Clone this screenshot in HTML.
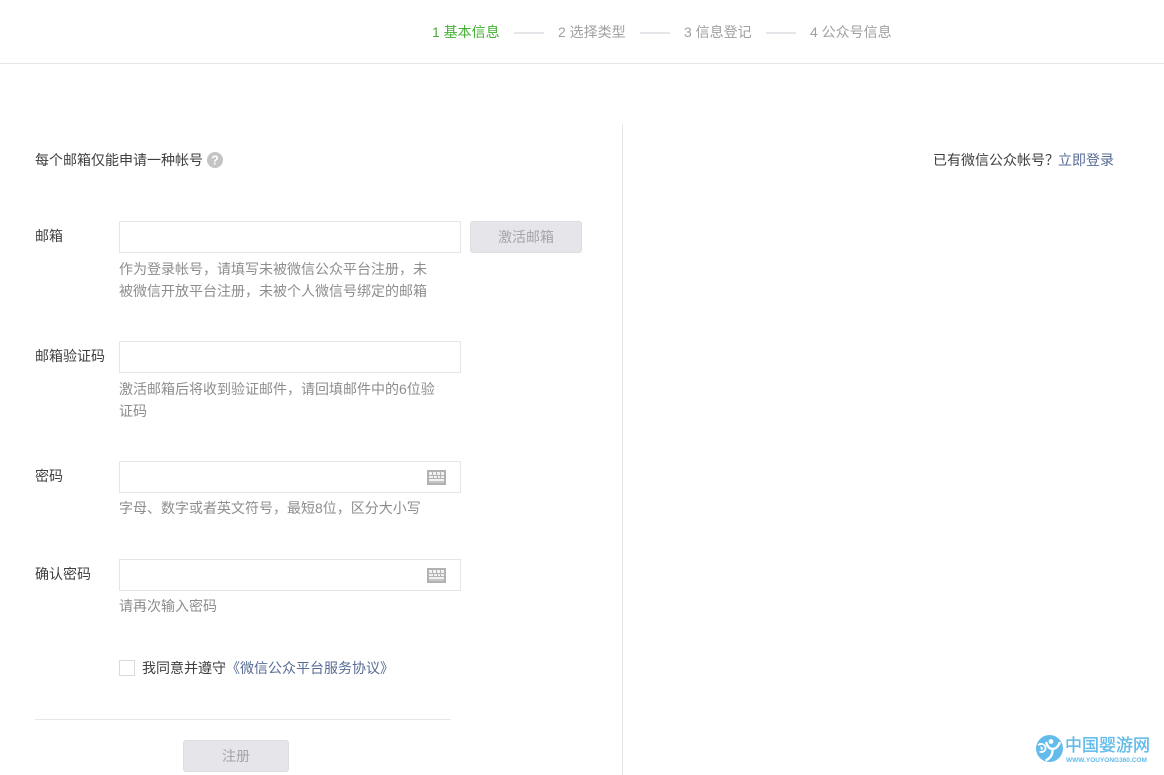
<!DOCTYPE html>
<html lang="zh-CN">
<head>
<meta charset="utf-8">
<title>注册</title>
<style>
html,body{margin:0;padding:0;background:#fff;}
body{width:1164px;height:775px;position:relative;overflow:hidden;font-family:"Liberation Sans","Noto Sans CJK SC",sans-serif;font-size:14px;color:#3e3e3e;}
.a{position:absolute;white-space:nowrap;line-height:22px;}
.step{top:21px;color:#a0a0a0;}
.line{position:absolute;top:32px;width:30px;height:2px;background:#e4e6ea;}
.box{position:absolute;left:119px;width:340px;height:30px;border:1px solid #e6e6e6;background:#fff;}
.tip{color:#8d8d8d;line-height:22px;left:119px;}
.btn{position:absolute;background:#e5e5ea;border:1px solid #dcdce2;border-radius:3px;color:#a5a5a8;text-align:center;box-sizing:border-box;}
.kb{position:absolute;left:427px;}
</style>
</head>
<body>
<div style="position:absolute;left:0;top:63px;width:1164px;height:1px;background:#e7e7eb"></div>
<div class="a step" style="left:432px;color:#45b035">1 基本信息</div>
<div class="line" style="left:514px"></div>
<div class="a step" style="left:558px">2 选择类型</div>
<div class="line" style="left:640px"></div>
<div class="a step" style="left:684px">3 信息登记</div>
<div class="line" style="left:766px"></div>
<div class="a step" style="left:810px">4 公众号信息</div>

<div style="position:absolute;left:622px;top:124px;width:1px;height:651px;background:#e7e7eb"></div>

<div class="a" style="left:35px;top:149px">每个邮箱仅能申请一种帐号</div>
<svg style="position:absolute;left:207px;top:152px" width="16" height="16" viewBox="0 0 16 16"><circle cx="8" cy="8" r="8" fill="#c4c4c4"/><text x="8" y="12.5" text-anchor="middle" font-family="Liberation Sans" font-weight="bold" font-size="12.5" fill="#fff">?</text></svg>
<div class="a" style="left:933px;top:149px">已有微信公众帐号？</div>
<div class="a" style="left:1058px;top:149px;color:#576b95">立即登录</div>

<div class="a" style="left:35px;top:225px">邮箱</div>
<div class="box" style="top:221px"></div>
<div class="btn" style="left:470px;top:221px;width:112px;height:32px;line-height:30px">激活邮箱</div>
<div class="a tip" style="top:258px">作为登录帐号，请填写未被微信公众平台注册，未</div>
<div class="a tip" style="top:280px">被微信开放平台注册，未被个人微信号绑定的邮箱</div>

<div class="a" style="left:35px;top:345px">邮箱验证码</div>
<div class="box" style="top:341px"></div>
<div class="a tip" style="top:378px">激活邮箱后将收到验证邮件，请回填邮件中的6位验</div>
<div class="a tip" style="top:400px">证码</div>

<div class="a" style="left:35px;top:465px">密码</div>
<div class="box" style="top:461px"></div>
<svg class="kb" style="top:470px" width="19" height="15" viewBox="0 0 19 15"><rect width="19" height="15" fill="#b2b2b2"/><path d="M2 2h3v3H2zM6 2h3v3H6zM10 2h3v3h-3zM14 2h3v3h-3zM2 6h4v2H2zM7 6h3v2H7zM11 6h2v2h-2zM14 6h3v2h-3zM2 9h15v2H2z" fill="#f1f1f1"/><path d="M2 12h15" stroke="#d8d8d8"/></svg>
<div class="a tip" style="top:497px">字母、数字或者英文符号，最短8位，区分大小写</div>

<div class="a" style="left:35px;top:563px">确认密码</div>
<div class="box" style="top:559px"></div>
<svg class="kb" style="top:568px" width="19" height="15" viewBox="0 0 19 15"><rect width="19" height="15" fill="#b2b2b2"/><path d="M2 2h3v3H2zM6 2h3v3H6zM10 2h3v3h-3zM14 2h3v3h-3zM2 6h4v2H2zM7 6h3v2H7zM11 6h2v2h-2zM14 6h3v2h-3zM2 9h15v2H2z" fill="#f1f1f1"/><path d="M2 12h15" stroke="#d8d8d8"/></svg>
<div class="a tip" style="top:595px">请再次输入密码</div>

<div style="position:absolute;left:119px;top:660px;width:14px;height:14px;border:1px solid #d9d9d9;background:#fff"></div>
<div class="a" style="left:142px;top:657px">我同意并遵守<span style="color:#576b95">《微信公众平台服务协议》</span></div>

<div style="position:absolute;left:35px;top:719px;width:416px;height:1px;background:#e7e7eb"></div>
<div class="btn" style="left:183px;top:740px;width:106px;height:32px;line-height:31px">注册</div>

<svg style="position:absolute;left:1036px;top:735px" width="27" height="27" viewBox="0 0 27 27"><circle cx="13.5" cy="13.5" r="13.5" fill="#62bbea"/><path d="M2 10c3-2 7-1 7.500 2.500C10 16 6.500 18 3.500 16.500M4.500 12.500c1.500-.5 2 1.500.5 2" stroke="#fff" stroke-width="1.800" fill="none"/><path d="M10 7c1.500 4.500 4 7 6.500 7 3.500 0 6-3 7.500-7M16.500 14c.5 5-2 9.500-7 11.500" stroke="#fff" stroke-width="2.400" fill="none"/><circle cx="15" cy="6.500" r="2.400" fill="#fff"/></svg>
<div class="a" style="left:1065px;top:735px;font-size:17px;line-height:22px;color:#62bbea;-webkit-text-stroke:.35px #62bbea">中国婴游网</div>
<div class="a" style="left:1066px;top:756px;font-size:6.5px;line-height:9px;color:#62bbea;font-weight:bold">WWW.YOUYONG360.COM</div>
</body>
</html>
